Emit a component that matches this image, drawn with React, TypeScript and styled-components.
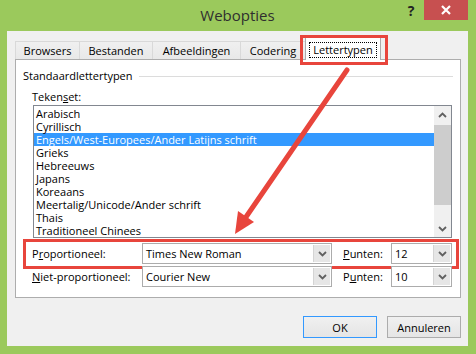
import styled, { createGlobalStyle } from "styled-components";

const GlobalStyle = createGlobalStyle`
  html, body {
    margin: 0;
    padding: 0;
  }
  body {
    font-family: "Open Sans", "Noto Sans", sans-serif;
    font-size: 11px;
    color: #000;
  }
`;

const tabs = [
  { label: "Browsers", width: 65 },
  { label: "Bestanden", width: 74 },
  { label: "Afbeeldingen", width: 89 },
  { label: "Codering", width: 66 },
];

const charsets = [
  "Arabisch",
  "Cyrillisch",
  "Engels/West-Europees/Ander Latijns schrift",
  "Grieks",
  "Hebreeuws",
  "Japans",
  "Koreaans",
  "Meertalig/Unicode/Ander schrift",
  "Thais",
  "Traditioneel Chinees",
];

const Chevron: React.FC<{ up?: boolean }> = ({ up }) => (
  <svg width="9" height="6" viewBox="0 0 9 6">
    <path
      d={up ? "M1 5 L4.5 1.5 L8 5" : "M1 1 L4.5 4.5 L8 1"}
      fill="none"
      stroke="#606060"
      strokeWidth="1.8"
    />
  </svg>
);

const App: React.FC = () => {
  return (
    <>
      <GlobalStyle />
      <Window>
        <TitleBar>
          <span />
          <Title>Webopties</Title>
          <TitleButtons>
            <HelpButton>?</HelpButton>
            <CloseButton>
              <svg width="10" height="10" viewBox="0 0 10 10">
                <path d="M1 1 L9 9 M9 1 L1 9" stroke="#fff" strokeWidth="2.2" />
              </svg>
            </CloseButton>
          </TitleButtons>
        </TitleBar>

        <Client>
          <TabStrip>
            {tabs.map((t) => (
              <Tab key={t.label} $w={t.width}>
                {t.label}
              </Tab>
            ))}
            <ActiveTab>
              <FocusText>Lettertypen</FocusText>
              <TabHighlight />
            </ActiveTab>
          </TabStrip>

          <Panel>
            <GroupHeader>
              <span>Standaardlettertypen</span>
              <GroupLine />
            </GroupHeader>
            <Content>
              <FieldLabel>
                Teken<Key>s</Key>et:
              </FieldLabel>
              <ListBox>
                <ListItems>
                  {charsets.map((c, i) => (
                    <ListItem key={c} $selected={i === 2}>
                      {c}
                    </ListItem>
                  ))}
                </ListItems>
                <ScrollBar>
                  <ScrollArrow>
                    <Chevron up />
                  </ScrollArrow>
                  <ScrollTrack>
                    <ScrollThumb />
                  </ScrollTrack>
                  <ScrollArrow>
                    <Chevron />
                  </ScrollArrow>
                </ScrollBar>
              </ListBox>

              <FontRow>
                <RowLabel>
                  P<Key>r</Key>oportioneel:
                </RowLabel>
                <Combo $w={190}>
                  <ComboText>Times New Roman</ComboText>
                  <DropButton>
                    <Chevron />
                  </DropButton>
                </Combo>
                <SizeLabel>
                  <Key>P</Key>unten:
                </SizeLabel>
                <Combo $w={61}>
                  <ComboText>12</ComboText>
                  <DropButton>
                    <Chevron />
                  </DropButton>
                </Combo>
                <RowHighlight />
              </FontRow>

              <FontRow>
                <RowLabel>
                  <Key>N</Key>iet-proportioneel:
                </RowLabel>
                <Combo $w={190}>
                  <ComboText>Courier New</ComboText>
                  <DropButton>
                    <Chevron />
                  </DropButton>
                </Combo>
                <SizeLabel>
                  P<Key>u</Key>nten:
                </SizeLabel>
                <Combo $w={61}>
                  <ComboText>10</ComboText>
                  <DropButton>
                    <Chevron />
                  </DropButton>
                </Combo>
              </FontRow>
            </Content>
          </Panel>

          <Footer>
            <Button $default>OK</Button>
            <Button>Annuleren</Button>
          </Footer>
        </Client>

        {/* annotation arrow drawn over the dialog */}
        <ArrowLayer width="476" height="354" viewBox="0 0 476 354">
          <line
            x1="347"
            y1="70"
            x2="246"
            y2="217"
            stroke="#e8453c"
            strokeWidth="5"
            strokeLinecap="round"
          />
          <polygon points="235,234 254,222 238,211" fill="#e8453c" />
        </ArrowLayer>
      </Window>
    </>
  );
};
export default App;

const Window = styled.div`
  position: relative;
  width: 476px;
  height: 354px;
  box-sizing: border-box;
  padding: 0 8px 8px 7px;
  background: #9bc95c;
  display: flex;
  flex-direction: column;
`;

const TitleBar = styled.div`
  height: 31px;
  display: grid;
  grid-template-columns: 1fr auto 1fr;
  align-items: start;
`;

const Title = styled.div`
  font-size: 15px;
  color: #2f2f2f;
  line-height: 20px;
  padding-top: 5px;
`;

const TitleButtons = styled.div`
  display: flex;
  justify-content: flex-end;
`;

const HelpButton = styled.div`
  width: 26px;
  height: 20px;
  font-weight: bold;
  font-size: 14px;
  line-height: 22px;
  text-align: center;
  color: #222;
`;

const CloseButton = styled.div`
  width: 44px;
  height: 20px;
  background: #c75050;
  display: flex;
  align-items: center;
  justify-content: center;
`;

const Client = styled.div`
  flex: 1;
  background: #f0f0f0;
  display: flex;
  flex-direction: column;
  padding: 5px 7px 0 8px;
`;

const TabStrip = styled.div`
  display: flex;
  align-items: flex-end;
  height: 23px;
  position: relative;
  z-index: 2;
`;

const Tab = styled.div<{ $w: number }>`
  width: ${(p) => p.$w}px;
  height: 18px;
  box-sizing: border-box;
  margin-right: -1px;
  border: 1px solid #d9d9d9;
  border-bottom: none;
  background: linear-gradient(#f0f0f0, #e8e8e8);
  display: flex;
  align-items: center;
  justify-content: center;
  line-height: 16px;
`;

const ActiveTab = styled.div`
  position: relative;
  width: 76px;
  height: 24px;
  box-sizing: border-box;
  margin-bottom: -1px;
  border: 1px solid #acacac;
  border-bottom: none;
  background: #fff;
  display: flex;
  align-items: flex-start;
  justify-content: center;
  padding-top: 6px;
`;

const FocusText = styled.span`
  outline: 1px dotted #000;
  padding: 0 3px;
  line-height: 14px;
`;

const TabHighlight = styled.div`
  position: absolute;
  left: -6px;
  right: -8px;
  top: -2px;
  bottom: -5px;
  border: 3px solid #e8453c;
`;

const Panel = styled.div`
  height: 239px;
  box-sizing: border-box;
  border: 1px solid #adadad;
  background: #fff;
  position: relative;
  z-index: 1;
`;

const GroupHeader = styled.div`
  display: flex;
  align-items: center;
  gap: 6px;
  padding: 8px 7px 0 7px;
  line-height: 16px;
`;

const GroupLine = styled.div`
  flex: 1;
  height: 1px;
  background: #dcdcdc;
`;

const Content = styled.div`
  padding: 5px 8px 0 16px;
  display: flex;
  flex-direction: column;
`;

const FieldLabel = styled.div`
  line-height: 16px;
`;

const Key = styled.span`
  text-decoration: underline;
`;

const ListBox = styled.div`
  margin-left: 1px;
  width: 419px;
  height: 133px;
  box-sizing: border-box;
  border: 1px solid #828790;
  display: flex;
`;

const ListItems = styled.div`
  flex: 1;
  padding-top: 1px;
`;

const ListItem = styled.div<{ $selected?: boolean }>`
  height: 13px;
  line-height: 13px;
  padding-left: 2px;
  white-space: nowrap;
  background: ${(p) => (p.$selected ? "#3399ff" : "transparent")};
  color: ${(p) => (p.$selected ? "#fff" : "#000")};
`;

const ScrollBar = styled.div`
  width: 17px;
  background: #f0f0f0;
  display: flex;
  flex-direction: column;
`;

const ScrollArrow = styled.div`
  height: 17px;
  display: flex;
  align-items: center;
  justify-content: center;
`;

const ScrollTrack = styled.div`
  flex: 1;
  padding-top: 2px;
`;

const ScrollThumb = styled.div`
  height: 80px;
  background: #cdcdcd;
`;

const FontRow = styled.div`
  position: relative;
  display: flex;
  align-items: center;
  height: 21px;
  margin-top: 5px;
  & + & {
    margin-top: 2px;
  }
`;

const RowLabel = styled.div`
  width: 110px;
`;

const SizeLabel = styled.div`
  width: 48px;
  margin-left: 11px;
`;

const Combo = styled.div<{ $w: number }>`
  width: ${(p) => p.$w}px;
  height: 21px;
  box-sizing: border-box;
  border: 1px solid #acacac;
  background: #fff;
  display: flex;
  padding: 1px;
`;

const ComboText = styled.div`
  flex: 1;
  padding-left: 2px;
  line-height: 17px;
`;

const DropButton = styled.div`
  width: 16px;
  background: #e6e6e6;
  border-left: 1px solid #d4d4d4;
  display: flex;
  align-items: center;
  justify-content: center;
`;

const RowHighlight = styled.div`
  position: absolute;
  left: -9px;
  right: -7px;
  top: -4px;
  bottom: -5px;
  border: 3px solid #e8453c;
  pointer-events: none;
`;

const Footer = styled.div`
  display: flex;
  justify-content: flex-end;
  gap: 10px;
  padding-top: 18px;
`;

const Button = styled.div<{ $default?: boolean }>`
  width: 74px;
  height: 22px;
  box-sizing: border-box;
  border: 1px solid ${(p) => (p.$default ? "#3399ff" : "#acacac")};
  background: linear-gradient(#f0f0f0, #e5e5e5);
  display: flex;
  align-items: center;
  justify-content: center;
`;

const ArrowLayer = styled.svg`
  position: absolute;
  left: 0;
  top: 0;
  pointer-events: none;
  z-index: 5;
`;
